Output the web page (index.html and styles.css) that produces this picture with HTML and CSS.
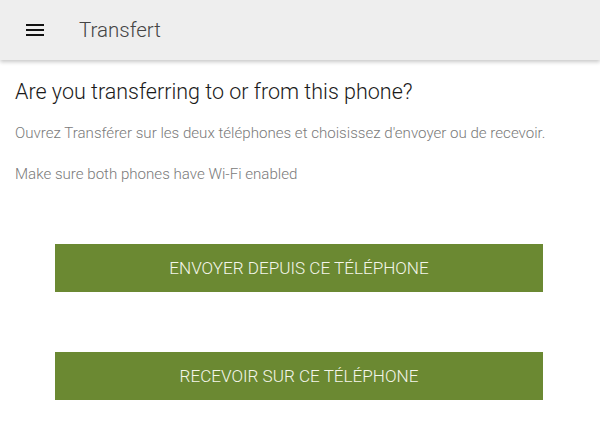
FILE: index.html
```html
<!DOCTYPE html>
<html lang="fr">
<head>
<meta charset="utf-8">
<link rel="stylesheet" href="styles.css">
</head>
<body>
<header class="appbar">
  <svg class="menu" width="24" height="24" viewBox="0 0 24 24"><path d="M3 18h18v-2H3v2zm0-5h18v-2H3v2zm0-7v2h18V6H3z" fill="#111"/></svg>
  <span class="title">Transfert</span>
</header>
<main class="content">
  <h1 class="heading">Are you transferring to or from this phone?</h1>
  <p class="note">Ouvrez Transférer sur les deux téléphones et choisissez d'envoyer ou de recevoir.</p>
  <p class="note note-second">Make sure both phones have Wi-Fi enabled</p>
  <div class="actions">
    <button class="btn">ENVOYER DEPUIS CE TÉLÉPHONE</button>
    <button class="btn">RECEVOIR SUR CE TÉLÉPHONE</button>
  </div>
</main>
</body>
</html>
```
FILE: styles.css
```css
html, body {
  margin: 0;
  padding: 0;
  background: #ffffff;
  font-family: Roboto, "Noto Sans", sans-serif;
}
.appbar {
  height: 60px;
  background: #eeeeee;
  display: flex;
  align-items: center;
  box-shadow: 0 2px 4px rgba(0, 0, 0, 0.22);
  position: relative;
}
.menu {
  margin-left: 23px;
  flex: none;
}
.title {
  margin-left: 32px;
  font-size: 20.5px;
  color: #444444;
  font-weight: 300;
}
.content {
  padding: 18px 15px 0 15px;
}
.heading {
  margin: 0;
  font-size: 21.5px;
  line-height: 28px;
  font-weight: 300;
  color: #1a1a1a;
}
.note {
  margin: 17px 0 0 0;
  font-size: 15.1px;
  line-height: 20px;
  font-weight: 300;
  color: #7a7a7a;
}
.note-second {
  margin-top: 21px;
}
.actions {
  display: flex;
  flex-direction: column;
  gap: 60px;
  margin: 60px 42px 0 40px;
}
.btn {
  height: 48px;
  border: none;
  background: #6b8932;
  color: #f4f6ea;
  font-family: Roboto, "Noto Sans", sans-serif;
  font-size: 17.1px;
  font-weight: 300;
  padding: 0;
}
```
